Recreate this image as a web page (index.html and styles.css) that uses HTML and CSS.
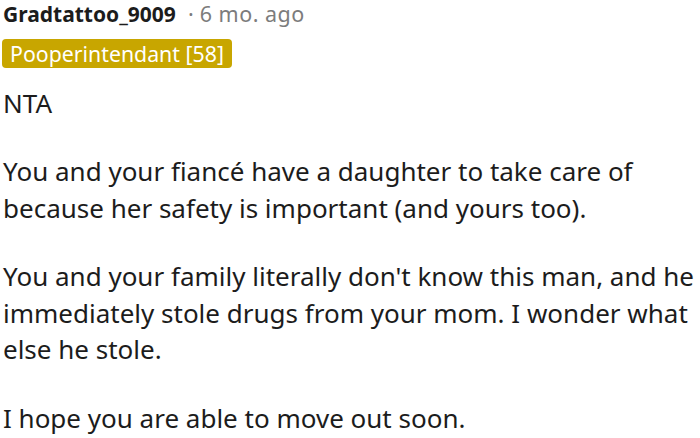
FILE: index.html
```html
<!DOCTYPE html>
<html>
<head>
<meta charset="utf-8">
<link rel="stylesheet" href="styles.css">
</head>
<body>
<div class="comment">
  <div class="meta">
    <span class="user">Gradtattoo_9009</span><span class="sep">·</span><span class="time">6 mo. ago</span>
  </div>
  <div class="flair-row"><span class="flair">Pooperintendant [58]</span></div>
  <div class="body">
    <p>NTA</p>
    <p>You and your fiancé have a daughter to take care of because her safety is important (and yours too).</p>
    <p>You and your family literally don't know this man, and he immediately stole drugs from your mom. I wonder what else he stole.</p>
    <p>I hope you are able to move out soon.</p>
  </div>
</div>
</body>
</html>
```

FILE: styles.css
```css
html, body {
  margin: 0;
  padding: 0;
  background: #ffffff;
}
.comment {
  padding: 0 0 0 3px;
  font-family: "Noto Sans", "Open Sans", sans-serif;
  color: #1c1c1c;
}
.meta {
  display: flex;
  align-items: baseline;
  padding-top: 1px;
  font-size: 21.5px;
  line-height: 26px;
  white-space: nowrap;
}
.user {
  font-size: 21px;
  font-weight: 700;
  color: #1c1c1c;
}
.sep {
  color: #7c7c7c;
  margin-left: 12px;
  margin-right: 6px;
}
.time {
  color: #7c7c7c;
  letter-spacing: 0.5px;
}
.flair-row {
  margin-top: 11.5px;
  display: flex;
}
.flair {
  background: #c8a600;
  color: #ffffff;
  font-size: 21.3px;
  line-height: 29.5px;
  padding: 0 8px 0 8px;
  border-radius: 4px;
  margin-left: -1px;
}
.body {
  font-size: 26px;
  line-height: 36.5px;
  margin-top: 16.7px;
  width: 697px;
}
.body p {
  margin: 0 0 32px 0;
}
.body p:last-child {
  margin-bottom: 0;
}
```
